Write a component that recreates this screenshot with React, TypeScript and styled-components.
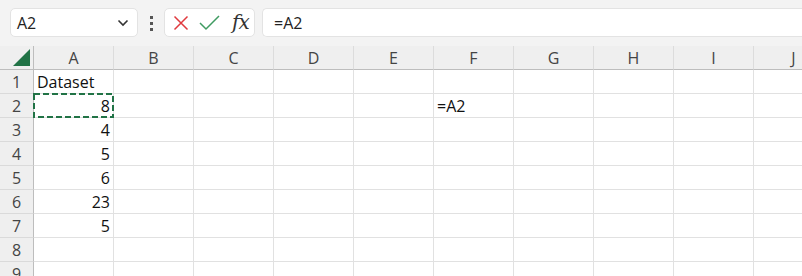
import React from "react";
import styled, { createGlobalStyle } from "styled-components";

const Global = createGlobalStyle`
  html, body { margin: 0; padding: 0; background: #f3f3f3; }
  body { font-family: "Open Sans", "Liberation Sans", sans-serif; overflow: hidden; }
`;

const Page = styled.div`
  width: 802px;
  height: 276px;
  overflow: hidden;
  background: #f3f3f3;
`;

const Toolbar = styled.div`
  height: 46px;
  display: flex;
  align-items: flex-start;
  padding: 8px 0 0 10px;
  box-sizing: border-box;
`;

const Box = styled.div<{ $w?: number; $grow?: boolean }>`
  height: 29px;
  box-sizing: border-box;
  background: #fff;
  border: 1px solid #e3e3e3;
  border-radius: 5px;
  display: flex;
  align-items: center;
  ${(p) => (p.$w ? `width: ${p.$w}px;` : "")}
  ${(p) => (p.$grow ? "flex: 1; border-right: none; border-radius: 5px 0 0 5px;" : "")}
`;

const NameText = styled.span`
  flex: 1;
  padding-left: 6px;
  font-size: 16px;
  color: #222;
`;

const Chevron = styled.svg`
  margin-right: 8px;
`;

const Dots = styled.div`
  width: 26px;
  display: flex;
  flex-direction: column;
  align-items: center;
  gap: 3px;
  padding-top: 8px;
`;

const Dot = styled.span`
  width: 3px;
  height: 3px;
  background: #555;
`;

const IconRow = styled(Box)`
  padding-left: 8px;
  margin-right: 7px;
`;

const Fx = styled.span`
  font-family: "DejaVu Serif", "Liberation Serif", serif;
  font-style: italic;
  font-size: 20px;
  color: #333;
  margin-left: 11px;
  letter-spacing: -1px;
  line-height: 1;
  padding-bottom: 2px;
`;

const FormulaText = styled.span`
  padding-left: 11px;
  font-size: 16px;
  color: #222;
`;

const Sheet = styled.div`
  display: grid;
  grid-template-columns: 34px repeat(10, 80px);
  grid-auto-rows: 24px;
  background: #fff;
`;

const Corner = styled.div`
  background: #efefef;
  border-bottom: 1px solid #bdbdbd;
  border-right: 1px solid #bdbdbd;
  box-sizing: border-box;
  display: flex;
  align-items: flex-end;
  justify-content: flex-end;
  padding: 0 3px 3px 0;
`;

const ColHead = styled.div`
  background: #efefef;
  border-bottom: 1px solid #bdbdbd;
  border-right: 1px solid #dcdcdc;
  box-sizing: border-box;
  display: flex;
  align-items: center;
  justify-content: center;
  font-size: 16px;
  color: #444;
`;

const RowHead = styled.div`
  background: #efefef;
  border-right: 1px solid #bdbdbd;
  border-bottom: 1px solid #dadada;
  box-sizing: border-box;
  display: flex;
  align-items: center;
  justify-content: center;
  font-size: 16px;
  color: #444;
`;

const Cell = styled.div<{ $num?: boolean }>`
  position: relative;
  border-right: 1px solid #e1e1e1;
  border-bottom: 1px solid #e1e1e1;
  box-sizing: border-box;
  display: flex;
  align-items: center;
  justify-content: ${(p) => (p.$num ? "flex-end" : "flex-start")};
  padding: 0 3px;
  font-size: 16px;
  color: #111;
  white-space: nowrap;
`;

const Marquee = styled.svg`
  position: absolute;
  left: -1px;
  top: -1px;
`;

const cols = ["A", "B", "C", "D", "E", "F", "G", "H", "I", "J"];

const data: Record<string, { v: string; num?: boolean }> = {
  "1-A": { v: "Dataset" },
  "2-A": { v: "8", num: true },
  "3-A": { v: "4", num: true },
  "4-A": { v: "5", num: true },
  "5-A": { v: "6", num: true },
  "6-A": { v: "23", num: true },
  "7-A": { v: "5", num: true },
  "2-F": { v: "=A2" },
};

export default function App() {
  const rows = [1, 2, 3, 4, 5, 6, 7, 8, 9];
  return (
    <Page>
      <Global />
      <Toolbar>
        <Box $w={128}>
          <NameText>A2</NameText>
          <Chevron width="12" height="8" viewBox="0 0 12 8">
            <path d="M1.5 1.5 L6 6 L10.5 1.5" fill="none" stroke="#333" strokeWidth="1.6" />
          </Chevron>
        </Box>
        <Dots>
          <Dot />
          <Dot />
          <Dot />
        </Dots>
        <IconRow $w={91}>
          <svg width="16" height="16" viewBox="0 0 16 16">
            <path d="M1.5 1.5 L14.5 14.5 M14.5 1.5 L1.5 14.5" stroke="#e0393e" strokeWidth="1.5" fill="none" />
          </svg>
          <svg width="22" height="16" viewBox="0 0 22 16" style={{ marginLeft: 10 }}>
            <path d="M1 8 L7 14 L20 1" stroke="#3f9b61" strokeWidth="1.5" fill="none" />
          </svg>
          <Fx>fx</Fx>
        </IconRow>
        <Box $grow>
          <FormulaText>=A2</FormulaText>
        </Box>
      </Toolbar>
      <Sheet>
        <Corner>
          <svg width="17" height="17" viewBox="0 0 17 17">
            <path d="M17 0 L17 17 L0 17 Z" fill="#217346" />
          </svg>
        </Corner>
        {cols.map((c) => (
          <ColHead key={c}>{c}</ColHead>
        ))}
        {rows.map((r) => (
          <React.Fragment key={r}>
            <RowHead>{r}</RowHead>
            {cols.map((c) => {
              const d = data[`${r}-${c}`];
              const sel = r === 2 && c === "A";
              return (
                <Cell key={c} $num={d?.num}>
                  {d?.v}
                  {sel && (
                    <Marquee width="81" height="25" viewBox="0 0 81 25">
                      <rect x="1" y="1" width="79" height="23" fill="none" stroke="#217346" strokeWidth="2" strokeDasharray="6 3" />
                    </Marquee>
                  )}
                </Cell>
              );
            })}
          </React.Fragment>
        ))}
      </Sheet>
    </Page>
  );
}
